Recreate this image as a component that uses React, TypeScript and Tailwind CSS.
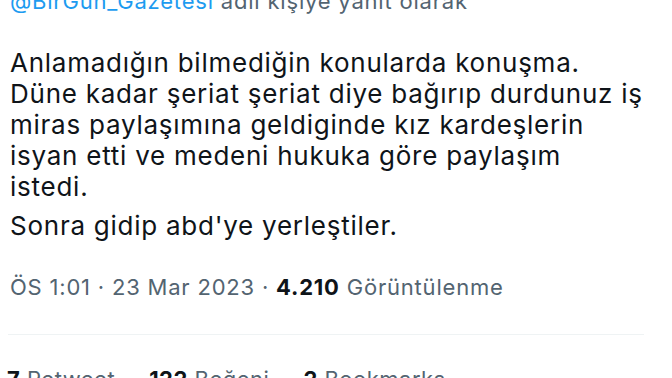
import React from "react";

const body = [
  "Anlamadığın bilmediğin konularda konuşma.",
  "Düne kadar şeriat şeriat diye bağırıp durdunuz iş",
  "miras paylaşımına geldiginde kız kardeşlerin",
  "isyan etti ve medeni hukuka göre paylaşım",
  "istedi.",
  "Sonra gidip abd'ye yerleştiler.",
];

export default function App() {
  return (
    <div className="h-[378px] w-[672px] overflow-hidden bg-white font-['Inter','Liberation_Sans',sans-serif] text-[#0f1419]">
      <div className="-mt-[13px] pl-[10px] text-[22px] leading-[28px] tracking-[0.8px] text-[#536471]">
        <span className="text-[#1d9bf0]">@BirGun_Gazetesi</span> adlı kişiye yanıt olarak
      </div>
      <div className="mt-[32px] pl-[10px] text-[26px] leading-[31px] tracking-[0.75px]">
        {body.map((l, i) => (
          <div key={i} className={i === 5 ? "mt-[8px]" : ""}>
            {l}
          </div>
        ))}
      </div>
      <div className="mt-[32px] pl-[10px] text-[22px] leading-[28px] tracking-[0.8px] text-[#536471]">
        ÖS 1:01 · 23 Mar 2023 · <span className="font-bold text-[#0f1419]">4.210</span> Görüntülenme
      </div>
      <div className="ml-[8px] mt-[33px] h-px w-[636px] bg-[#eff3f4]" />
      <div className="mt-[30px] flex gap-[34px] pl-[7px] text-[22px] leading-[28px] tracking-[0.5px] text-[#536471]">
        <span>
          <span className="font-bold text-[#0f1419]">7</span> Retweet
        </span>
        <span>
          <span className="font-bold text-[#0f1419]">122</span> Beğeni
        </span>
        <span>
          <span className="font-bold text-[#0f1419]">2</span> Bookmarks
        </span>
      </div>
    </div>
  );
}
